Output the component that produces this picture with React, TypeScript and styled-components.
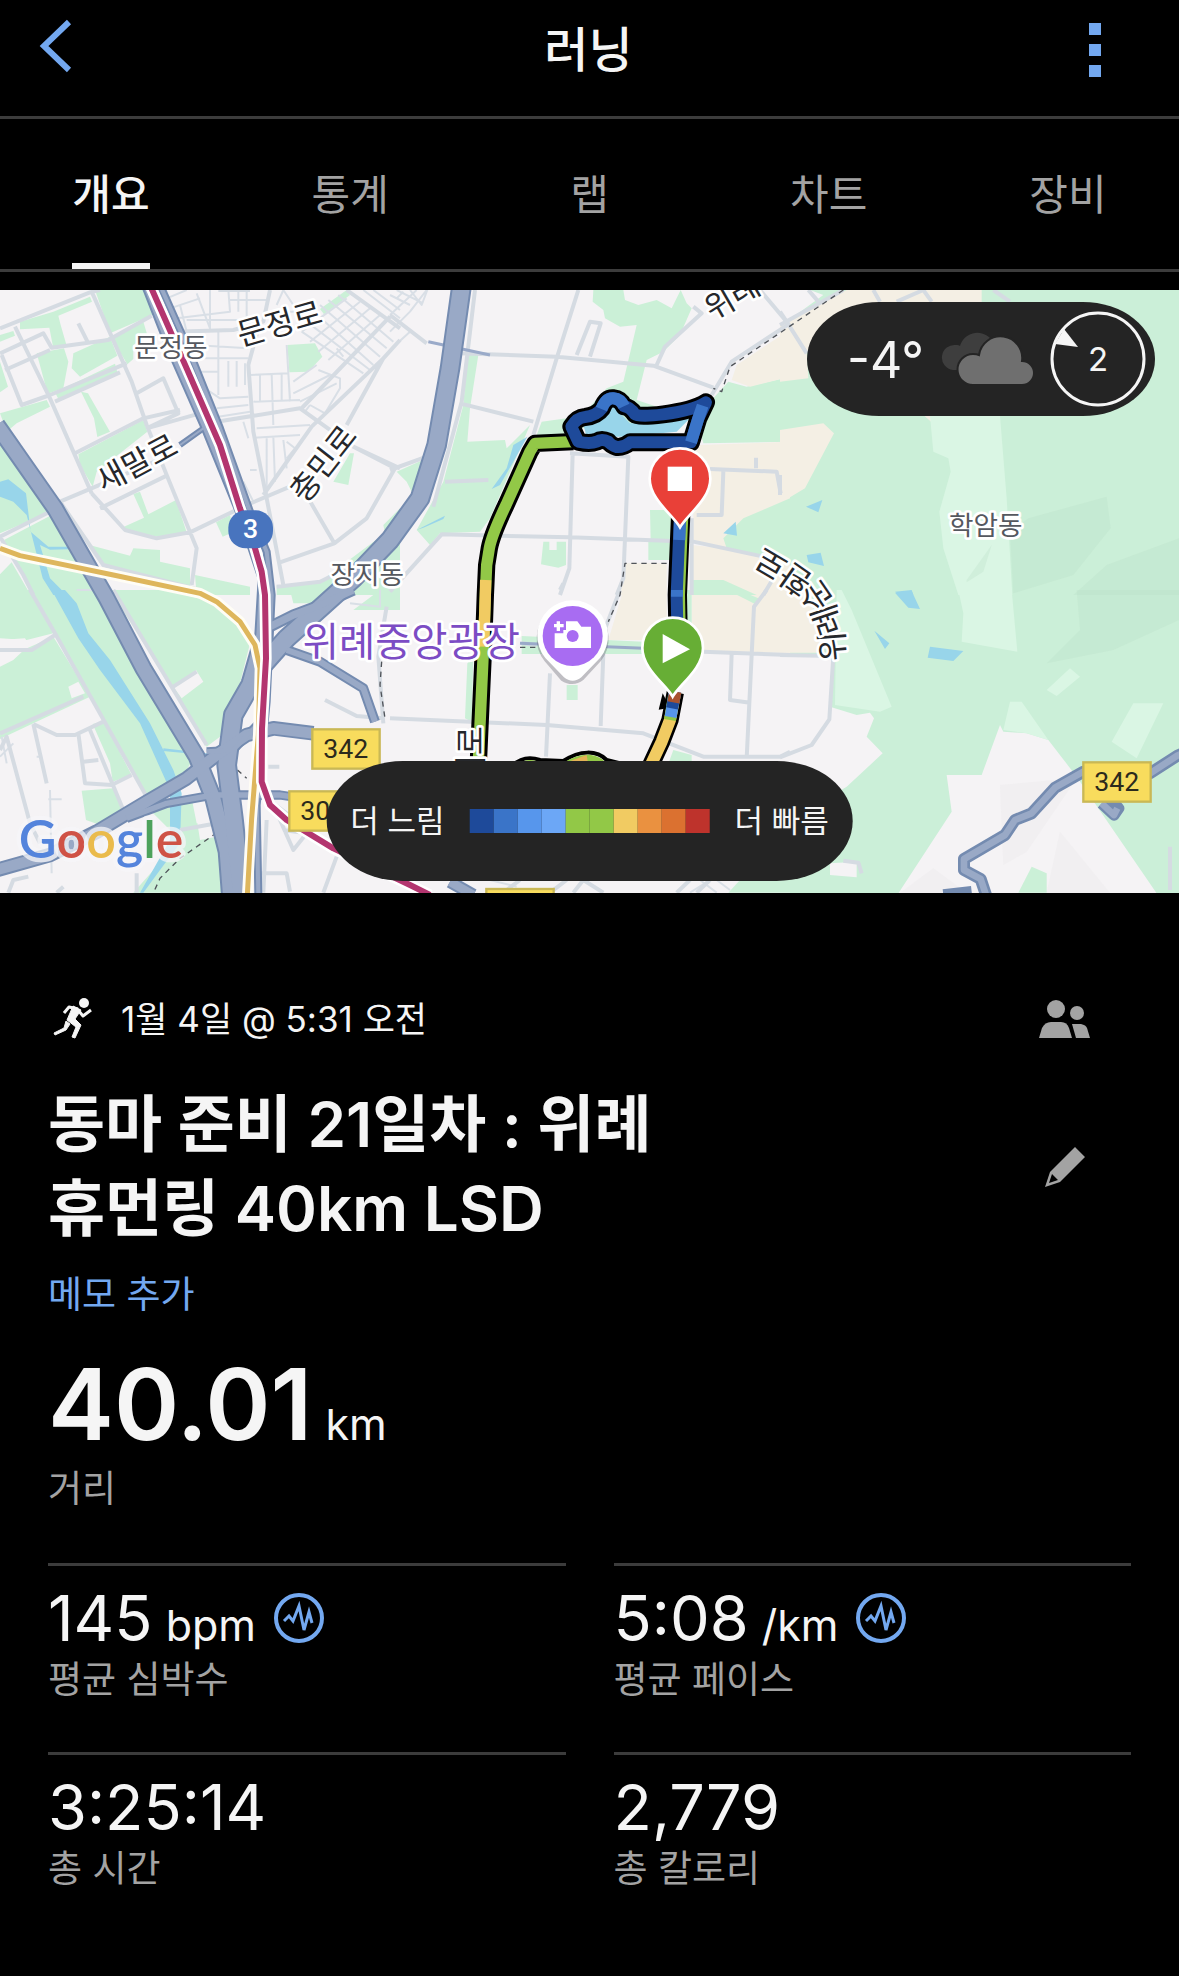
import React from "react";
import styled, { createGlobalStyle } from "styled-components";

const FONT = `Inter, "Noto Sans CJK KR", "Noto Sans", sans-serif`;
const KR = `"Noto Sans CJK KR", "Noto Sans", sans-serif`;

const color = {
  bg: "#000000",
  text: "#f5f5f5",
  muted: "#a3a3a3",
  line: "#3c3c3c",
  accent: "#73a8f0",
  panel: "#242424",
};

const GlobalStyle = createGlobalStyle`
  *, *::before, *::after { box-sizing: border-box; }
  html, body { margin: 0; background: ${color.bg}; }
  body { font-family: ${FONT}; color: ${color.text}; }
  h1, h2, p, dl, dt, dd { margin: 0; font-weight: 400; }
  button { font: inherit; color: inherit; background: none; border: 0; padding: 0; cursor: pointer; }
  svg { display: block; }
`;

const Screen = styled.main`
  min-height: 100vh;
  background: ${color.bg};
`;

const Header = styled.header`
  display: grid;
  grid-template-columns: 1fr auto 1fr;
  align-items: start;
  height: 119px;
  padding: 16px 78px 0 36px;
  border-bottom: 3px solid ${color.line};
`;

const HeaderTitle = styled.h1`
  padding-left: 40px;
  font-size: 48px;
  font-weight: 500;
  line-height: 68px;
`;

const IconButton = styled.button<{ $end?: boolean }>`
  justify-self: ${(p) => (p.$end ? "end" : "start")};
  color: ${color.accent};
`;

const Tabs = styled.nav`
  display: flex;
  justify-content: space-between;
  padding: 0 72px;
  border-bottom: 3px solid ${color.line};
`;

const Tab = styled.button<{ $active?: boolean }>`
  min-width: 78px;
  height: 150px;
  border-bottom: 6px solid ${(p) => (p.$active ? color.text : "transparent")};
  font-size: 42px;
  font-weight: ${(p) => (p.$active ? 500 : 400)};
  color: ${(p) => (p.$active ? color.text : color.muted)};
`;

const MapArea = styled.section`
  position: relative;
  margin-top: 18px;
  overflow: hidden;
`;

const MapSvg = styled.svg`
  width: 100%;
  height: auto;
`;

const Weather = styled.div`
  position: absolute;
  top: 12px;
  right: 24px;
  display: flex;
  align-items: center;
  height: 114px;
  padding: 0 9px 0 40px;
  border-radius: 72px / 57px;
  background: ${color.panel};
`;

const Temperature = styled.span`
  width: 93px;
  padding-top: 2px;
  font-size: 50px;
  line-height: 60px;
`;

const Wind = styled.div`
  display: grid;
  place-items: center;
  margin-left: 16px;
  > * { grid-area: 1 / 1; }
`;

const WindSpeed = styled.span`
  font-size: 33px;
  line-height: 40px;
`;

const Legend = styled.div`
  position: absolute;
  bottom: 12px;
  left: 50%;
  transform: translateX(-50%);
  display: flex;
  align-items: center;
  gap: 25px;
  height: 120px;
  padding: 0 24px;
  border-radius: 76px / 60px;
  background: ${color.panel};
  font-size: 31px;
  white-space: nowrap;
`;

const LegendLabel = styled.span`
  padding-bottom: 5px;
`;

const Scale = styled.div`
  display: flex;
`;

const Swatch = styled.i<{ $fill: string }>`
  width: 24px;
  height: 24px;
  background: ${(p) => p.$fill};
`;

const Details = styled.section`
  padding: 96px 48px 0;
`;

const DateRow = styled.div`
  display: flex;
  align-items: center;
  height: 60px;
  padding-right: 40px;
`;

const DateText = styled.p`
  flex: 1;
  padding-left: 20px;
  font-size: 35px;
  line-height: 48px;
`;

const TitleRow = styled.div`
  display: flex;
  align-items: center;
  justify-content: space-between;
  padding: 34px 46px 0 0;
`;

const ActivityTitle = styled.h2`
  max-width: 640px;
  font-size: 62px;
  font-weight: 600;
  line-height: 84px;
`;

const PlainButton = styled.button`
  color: ${color.muted};
`;

const MemoLink = styled.a`
  display: inline-block;
  margin-top: 20px;
  font-size: 37px;
  line-height: 48px;
  color: ${color.accent};
  text-decoration: none;
`;

const Stat = styled.div<{ $hero?: boolean }>`
  display: flex;
  flex-direction: column;
  gap: 6px;
  padding: ${(p) => (p.$hero ? "30px 0 50px" : "20px 0 48px")};
  border-top: ${(p) => (p.$hero ? "0" : `3px solid ${color.line}`)};
`;

const StatLabel = styled.dt`
  order: 2;
  font-size: 37px;
  line-height: 48px;
  color: ${color.muted};
`;

const StatValue = styled.dd<{ $hero?: boolean }>`
  display: flex;
  align-items: center;
  gap: 18px;
  height: ${(p) => (p.$hero ? 110 : 64)}px;
  font-size: ${(p) => (p.$hero ? 99 : 63)}px;
  font-weight: ${(p) => (p.$hero ? 600 : 400)};
  line-height: ${(p) => (p.$hero ? 110 : 64)}px;
`;

const Reading = styled.span`
  display: flex;
  align-items: baseline;
  gap: 13px;
`;

const Unit = styled.span`
  font-size: 43px;
  font-weight: 400;
  line-height: 43px;
`;

const StatGrid = styled.dl`
  display: grid;
  grid-template-columns: 1fr 1fr;
  column-gap: 48px;
`;

const scaleColors = [
  "#1e4a9a", "#3a74c8", "#5796ec", "#6ca7f6", "#92c847",
  "#92c847", "#f1cb62", "#ea9140", "#db7130", "#be332c",
];

const stats = [
  { value: "145", unit: "bpm", label: "평균 심박수", chart: true },
  { value: "5:08", unit: "/km", label: "평균 페이스", chart: true },
  { value: "3:25:14", label: "총 시간" },
  { value: "2,779", label: "총 칼로리" },
];

/* ---------- map data ---------- */

type Sheet = {
  at: [number, number];
  white?: string;
  green?: string;
  sand?: string;
  pale?: string;
  shade?: string;
  top?: string;
  water?: string;
  road?: string;
  lane?: string;
};

const sheets: Sheet[] = [
  {
    at: [0, 0],
    green:
      "M0 150L40 138L45 152L0 170z M60 133V110L160 80L270 35L276 50L175 92L182 120L200 182L160 190L148 128z M285 15H435L462 88L330 145z M332 155L430 110L442 150L400 180V222L382 238z M110 205L192 190L205 230L190 310L143 326z M220 205L330 155L352 212L240 275L215 250z M165 322L345 236L352 262L175 342z M0 230L24 305L0 322z M0 385L140 345L150 365L50 415L20 440z M243 320L264 325L330 440L292 456L282 400z M235 508L430 405L442 440L290 560L278 605L240 540z M400 627L420 620L445 688L528 645L560 742L500 758L400 745L362 730L432 698z M0 440L70 530L155 680L0 745z M12 765L155 690L300 930H95z M0 868L35 832L92 930H0z M268 780L390 812L400 790L480 795V830L570 850V905L450 872L300 835z M585 870L750 905V930H590z M862 180L945 175L967 215L925 260L868 262z M1040 15L960 72L972 88L1050 30z M648 712L690 690L702 740L668 755z M1050 505H1062L1045 600L1000 590z M1200 670L1150 720L1155 745L1020 845L960 890L830 902V930H1200z",
    water: "M0 590L25 583L78 625L92 740L145 785H205V793L150 794L120 780L150 880L200 930H160L128 880L80 690L40 650L0 635z",
    road:
      "M0 130L270 22L300 15 M45 125L150 340L275 625 M0 205L130 145L155 188L325 165L455 92 M15 255L150 195 M5 210L65 360L150 330L380 235 M275 20L395 290L440 420L500 570L590 790L575 900 M165 350L360 262 M225 505L430 400L540 375 M410 325L490 280L535 385L440 430 M440 430L600 385 M235 115L265 175 M180 650L500 515 M275 625L375 735L470 760L570 742L740 660L870 605 M300 670L500 572 M180 650L310 840L600 915 M190 660L0 755L70 870L100 930 M925 640L1003 775L1100 700L1185 550L1060 485L900 370L650 410 M840 832L1003 775 M830 905L960 890L1140 800 M750 15L655 15 M775 130L745 240L760 440L800 640L850 900 M520 140L700 135L790 110L810 15 M790 630L935 425L1150 220L1200 165 M1150 220L1040 420 M1040 15L1200 130 M900 375L1170 95 M1060 485L1200 550",
    lane:
      "M500 40L560 15 M510 70L600 40 M530 100L690 80L685 15 M540 60L560 140 M590 25L630 130 M630 15V135 M560 105H740V15 M715 15V80 M690 45H800 M580 180L745 190 M600 220H745 M655 140V330 M685 228V305 M710 228V305 M735 235V300 M590 260H655 M600 300L660 340L745 335 M650 370L745 360 M655 395L750 380 M750 270L865 265L870 340 M780 270V350 M815 268L820 420 M845 268V350 M760 350L900 345 M860 180L870 350 M880 290L950 240 M880 325L990 270 M900 350L1010 295 M955 255L1020 280V310L975 385L930 360 M915 380L930 360 M770 430L930 420 M760 458L900 450 M800 460V630 M820 455L825 590 M850 465L860 550 M860 470L885 490L860 520 M730 410L745 460 M750 555H770 M730 590L760 650 M935 75L1120 240 M960 60L1140 215 M985 45L1160 190 M1015 30L1180 170 M905 140L1090 265 M920 110L1110 255 M905 140L1040 40 M930 170L1080 50 M955 200L1110 70 M985 225L1140 90 M1010 190L1030 215 M1090 15L1200 100 M1120 15L1200 75 M850 15L880 60 M830 60L850 15 M870 80H940",
  },
  {
    at: [1170, 0],
    green:
      "M610 15H700L705 45L745 60L800 45L845 70L872 15L890 55L905 70L870 150L820 200L770 225L740 345L860 385L700 430H540L650 310L700 290L740 120L690 125L645 100L640 75L608 50z M455 410L530 400V450H440z M232 210H265L240 370L232 470L345 465L350 490L420 420L300 700L270 740L150 745L120 780L80 735L160 590L220 360z M20 560L110 520L75 640L50 590z M460 770H478V795H500V770H528V840L505 848L453 838z M780 675H850V825H775V770L782 765z M1015 290L1070 305L1200 275V470L940 475L930 440L960 350z",
    sand: "M1190 140L1040 240L1025 285L1080 305L1200 275V140z M930 480L1200 470V840L1000 790L910 765V480z M705 835H830V930H690z M905 780L1000 790L1200 830V930H905z",
    top: "M1200 640L1060 700L1000 760L1010 790L1200 835z M905 885L1000 885L1100 930H905z",
    water:
      "M1000 745L1037 710L1041 752z M350 550L370 480L412 455L370 530L330 600L305 612z M80 735L165 692L160 702L100 728z M580 420L640 400L660 355L720 415H800L900 400L860 440L700 455H590z",
    road:
      "M255 15L215 350L130 665 M565 15L500 220L430 450 M210 205L500 215L790 242L970 308 M560 210L600 110L632 115L600 215 M800 240L825 185L935 85L910 65 M965 330L1025 230L1200 115 M1110 15L1190 110 M210 355L430 410 M165 590L295 585 M0 555L110 515 M0 920L155 748L540 757L910 770L1120 815 M548 505L538 850L510 930 M540 505L715 515L700 880L680 930 M920 690H995L1000 560 M960 552L1160 560L1172 625 M1098 550V518 M905 700V930 M1120 930L1150 880 M0 90L110 175",
    lane: "M0 30L60 60 M0 90L80 15 M0 140L60 80L110 15 M20 15L100 55 M0 195L60 140 M20 40L40 20 M60 15L95 60L112 15",
  },
  {
    at: [2340, 0],
    white: "M0 15H90L130 30L20 110L0 90z",
    sand: "M0 115L200 15H605V60H300L80 200L85 280L0 290z M0 435L130 415L162 445L75 610L0 655z M430 390H470L455 412z",
    pale: "M450 393H660L680 640L697 930H535L490 790L478 680L512 560L505 520L460 500z",
    shade: "M745 700L980 635L992 730L880 870L700 925L690 740z M980 840L1197 760V930H880z M560 885L635 780L610 860L560 892z",
    water: "M78 665L127 645L115 682z M80 810L122 803L132 843L85 832z M345 920L395 915L400 930H360z",
    road: "M0 120L190 15 M85 15L115 50 M0 80L20 110L80 205 M280 15L300 50 M350 50L430 15L455 50 M640 15L690 50 M0 570V630",
  },
  {
    at: [0, 915],
    green:
      "M0 0H90L160 130L80 150L0 145z M0 210L160 140L270 320L100 400L0 447z M90 0H300L600 470L560 540L440 615L160 130z M330 0H500L650 40L755 140L720 280L660 440L620 470L520 300z M278 402L312 395L395 555L338 575L330 520z M245 602L340 595L372 662L300 705L258 690z M440 650L580 620L600 750L650 740L670 908H400L540 750z M870 0H1060L960 40H880z M1140 0H1200V60H1060z",
    white: "M0 150L75 145L88 165L40 210L0 230z M205 290L235 275L255 310L215 325z M520 290L588 240L610 275L545 325z M570 600L630 590L640 690L590 700z",
    water:
      "M155 0H195L230 40L265 130L330 210L450 400L520 540L545 610L540 760L480 840L430 908H420L510 750V600L420 400L300 240L235 145z M490 475L620 490V496L490 483z M710 540L745 575L720 550z",
    road:
      "M90 0L165 130L440 620 M0 180L95 180L165 135 M100 402L140 580 M100 402L170 435L225 435L310 395 M235 430L255 580L335 585L395 555 M0 430L250 320 M250 515L295 510 M270 420L370 660 M0 480L20 440L90 700L120 760 M340 0L620 465 M520 290L590 245 M820 645L880 780L920 730L850 720 M770 850L860 850L870 905 M800 690L790 908 M970 908L1010 800 M975 330L1070 378L1150 385 M1150 400L1135 200L1160 50 M805 530H838 M540 720L650 700 M25 908L40 870L85 860 M170 908L190 890 M410 850V908 M820 640L900 700",
    lane: "M0 500L40 460 M20 520L5 440 M110 500H125 M145 628H185 M150 600L155 850 M230 0L300 0 M1050 40L1140 50V0",
  },
  {
    at: [1170, 915],
    green:
      "M530 285H563V330H530z M232 220L250 200L245 395L225 385z M395 138L760 155V192H395z M850 480L905 495V513H838z M1050 870H1200V908H1015z",
    sand: "M700 0H830V150H655z M905 0H1200V188H940L905 110z",
    top: "M950 0H1045L1105 25L1095 42L1040 14z M890 0H905V110H890z",
    road:
      "M0 385L470 405L760 430L940 500H1170L1200 485 M480 250L468 500 M640 190L632 408 M510 0L520 -20 M690 0L640 130 M940 185L1200 195 M1025 190L1020 330L1080 338 M1130 0L1092 50L1070 505 M395 160L440 165 M350 900L390 870 M480 908L530 870 M550 908L580 870L640 908 M860 908L900 870 M920 908L960 870",
    lane: "M930 870L980 908 M960 870L900 908 M980 870L1020 900 M300 870L380 890",
  },
  {
    at: [2340, 915],
    sand: "M0 0H90L125 188H0z",
    white: "M0 190L155 200L150 350L230 375L270 368L282 385L260 440L308 490L200 590L150 620H0z M660 405L670 425L740 430L805 450L890 560L1130 910H355L515 665L500 555H605z M150 820L230 815V862L150 855z",
    pale: "M170 0H185L215 60L335 350L300 365L165 345z M535 0H695L712 185L545 155L550 70z M690 335H725L805 450L740 430L670 420z M1060 340H1150L1070 505L995 455z M800 300L870 235L900 260L830 318z",
    top: "M755 830L800 850V908H715z",
    shade: "M890 0L1197 0V90L1000 180L800 220L900 120z",
    water: "M345 8L395 3L420 57L385 53z M283 122L328 160L315 177z M450 170L550 183L520 213L443 203z",
    road: "M0 195L160 198L148 388L95 465L0 502 M190 812L235 818L245 850 M1170 770V900",
  },
];

const layer = (key: keyof Omit<Sheet, "at">, props: React.SVGProps<SVGPathElement>) =>
  sheets.map((s) =>
    s[key] ? (
      <path key={key + s.at.join()} transform={`translate(${s.at[0]} ${s.at[1]})`} d={s[key]} {...props} />
    ) : null
  );

const highways = [
  { d: "M-10 420L60 520L165 670L320 940L430 1150L590 1415L640 1540L680 1700L690 1830", w: 54 },
  { d: "M1385 0L1350 250L1310 480L1260 640L1170 765L1060 880L860 1060L780 1150L700 1290L680 1440L700 1600L725 1830", w: 62 },
  { d: "M440 0L510 180L620 430L730 700L790 880L780 1050L740 1190", w: 34 },
  { d: "M480 0L560 180L660 430L750 680L800 800L815 930L800 1250L770 1560L775 1830", w: 24 },
  { d: "M-10 1755L150 1710L290 1640L440 1550L560 1480L650 1410L740 1350L820 1330L940 1345", w: 44 },
  { d: "M380 1600L500 1555L640 1530L840 1530L940 1545", w: 28 },
  { d: "M800 1030L880 990L960 960L1060 915", w: 34 },
  { d: "M860 1095L960 1130L1090 1210L1125 1310", w: 30 },
  { d: "M620 1400L700 1395L790 1300", w: 26 },
  { d: "M540 480L610 430L650 410", w: 18 },
  { d: "M1350 1790L1420 1830", w: 38 },
];

const ridge = "M3560 1400L3532 1412L3450 1465L3250 1460L3165 1508L3095 1585L3045 1605L3015 1650L2892 1722V1755L2942 1782L2958 1830";
const yellowLine = "M0 790L60 812L340 870L600 925L650 950L720 1010L765 1080L780 1150L775 1350L755 1600L742 1830";
const redLine =
  "M450 0L560 250L660 480L720 670L765 790L785 860L795 930L798 1120L786 1330L785 1490L810 1560L860 1605L1000 1690L1230 1800L1290 1830";

const blueLoop =
  "M1735 470L1714 425Q1730 398 1755 396Q1790 392 1806 370Q1818 338 1840 340Q1862 342 1872 364Q1890 366 1905 388Q1915 397 1990 388Q2080 376 2118 352L2095 400L2073 472L1890 472Q1870 488 1850 486Q1832 480 1825 470Q1805 460 1790 470Q1770 478 1735 470Z";

const leftTrack = "M1720 470L1605 475L1590 500L1518 660Q1475 750 1468 790L1460 840L1456 930L1450 1100L1440 1320L1432 1500";

const mapName = {
  fontFamily: KR,
  stroke: "#ffffff",
  strokeWidth: 16,
  strokeLinejoin: "round" as const,
  paintOrder: "stroke",
  textAnchor: "middle" as const,
};

function Shield({ x, y, label }: { x: number; y: number; label: string }) {
  return (
    <g transform={`translate(${x} ${y})`}>
      <rect x="3" y="3" width="202" height="118" fill="#f8dc5d" stroke="#c9b855" strokeWidth="7" />
      <text x="103" y="88" textAnchor="middle" fontFamily="Roboto, sans-serif" fontSize="80" fill="#2c2a1c">
        {label}
      </text>
    </g>
  );
}

function Pin({ x, y, fill, children }: { x: number; y: number; fill: string; children: React.ReactNode }) {
  return (
    <g transform={`translate(${x} ${y})`}>
      <path
        d="M0 146C-20 110-91 62-91 0A91 91 0 0 1 91 0C91 62 20 110 0 146z"
        fill={fill}
        stroke="#ffffff"
        strokeWidth="8"
      />
      {children}
    </g>
  );
}

function RouteMap() {
  return (
    <MapSvg viewBox="0 15 3537 1809" role="img" aria-label="러닝 경로 지도">
      <rect width="3537" height="1830" fill="#f5f3f5" />
      <rect x="2370" width="1167" height="1830" fill="#cbefd8" />
      {layer("green", { fill: "#cbf0d7" })}
      {layer("white", { fill: "#f5f3f5" })}
      {layer("sand", { fill: "#f4efe4" })}
      {layer("pale", { fill: "#daf6e4" })}
      {layer("shade", { fill: "#b9dfc8", opacity: 0.3 })}
      {layer("top", { fill: "#cbf0d7" })}
      <path d="M3000 1500L3230 1480L3080 1700L3010 1740z M2700 1824L2800 1750L2900 1824z M3180 1640L3330 1824H3140z" fill="#eeecee" opacity="0.5" />
      {layer("water", { fill: "#98d5ea" })}
      <g fill="none" strokeLinejoin="round">
        {layer("lane", { stroke: "#d9dfe6", strokeWidth: 6 })}
        {layer("road", { stroke: "#d5dbe2", strokeWidth: 12 })}
        <path
          d="M2530 15L2190 245L2165 320L2140 310 M2000 835H1875L1860 930L1825 1010 M1560 1087H1620 M1145 1130L1140 1200L1155 1300 M690 1435L740 1480 M680 1440V1570L655 1640L540 1720L480 1780L460 1824"
          stroke="#50545a"
          strokeWidth="4"
          strokeDasharray="16 14"
        />
        <path d="M1560 1075L1930 1090 M1285 170L1470 210" stroke="#9aaac9" strokeWidth="9" />
        {highways.map((h) => (
          <path key={h.d} d={h.d} stroke="#748bb0" strokeWidth={h.w} />
        ))}
        {highways.map((h) => (
          <path key={h.d} d={h.d} stroke="#99a9c6" strokeWidth={h.w - 12} />
        ))}
        <path d="M3305 1555L3342 1590L3356 1570L3335 1545 M2830 1830L2915 1820" stroke="#748bb0" strokeWidth="34" />
        <path d="M3305 1555L3342 1590L3352 1570" stroke="#99a9c6" strokeWidth="20" />
        <path d={ridge} stroke="#748bb0" strokeWidth="36" />
        <path d={ridge} stroke="#99a9c6" strokeWidth="20" />
        <path d={yellowLine} stroke="#fffdf5" strokeWidth="32" />
        <path d={yellowLine} stroke="#deb65c" strokeWidth="15" />
        <path d={redLine} stroke="#ffffff" strokeWidth="34" />
        <path d={redLine} stroke="#b3356f" strokeWidth="18" />
      </g>

      <g fill="none" strokeLinejoin="round">
        <path d={leftTrack} stroke="#000" strokeWidth="52" />
        <path d={leftTrack} stroke="#92c847" strokeWidth="34" />
        <path d="M1457 885L1456 930L1451 1085" stroke="#f1cb62" strokeWidth="34" />
        <path d={blueLoop} stroke="#000" strokeWidth="54" />
        <path d={blueLoop} stroke="#1e4a9a" strokeWidth="36" />
        <path d="M1804 372Q1818 338 1840 340Q1862 342 1872 364 M2108 362L2095 400L2073 472" stroke="#3a74c8" strokeWidth="36" />
        <path d="M2042 690L2032 930L2035 1080" stroke="#000" strokeWidth="58" />
        <path d="M2046 690L2036 930L2039 1080" stroke="#92c847" strokeWidth="38" />
        <path d="M2040 690L2030 930L2033 1080" stroke="#1e4a9a" strokeWidth="36" />
        <path d="M2040 700L2038 765 M2031 915V935" stroke="#3a74c8" strokeWidth="36" />
        <path d="M2026 1222L2010 1305L1985 1370L1950 1445" stroke="#000" strokeWidth="52" />
        <path d="M1988 1225L1976 1274L2010 1268z" fill="#000" />
        <path d="M2026 1222L2010 1305L1985 1370L1950 1445" stroke="#f1cb62" strokeWidth="36" />
        <path d="M2022 1232L2010 1305" stroke="#92c847" strokeWidth="36" />
        <path d="M2024 1225L2012 1296" stroke="#5796ec" strokeWidth="36" />
        <path d="M2026 1220L2016 1270" stroke="#1e4a9a" strokeWidth="36" />
        <path d="M2026 1220L2020 1252" stroke="#a8532f" strokeWidth="36" />
        <path d="M1530 1450C1560 1415 1590 1415 1620 1425L1690 1428C1740 1395 1790 1395 1820 1425L1880 1440" stroke="#000" strokeWidth="12" />
        <path d="M1540 1445C1570 1420 1600 1422 1620 1432L1690 1434C1740 1402 1785 1402 1815 1430L1860 1445z" fill="#92c847" />
        <path d="M1630 1434L1700 1432L1760 1410L1765 1440H1630z" fill="#e4b255" />
      </g>

      <g transform="translate(1718 1053)">
        <path d="M-34 126C-12 140 12 140 32 124L84 68A108 108 0 1 0-84 68z" fill="#5d5d66" opacity="0.35" transform="translate(0 8)" />
        <path d="M-26 124C-10 138 10 138 26 124L82 66A106 106 0 1 0-82 66z" fill="#ffffff" />
        <circle r="90" fill="#a86cf2" />
        <path d="M-54-8H-28V-18H-20V-44H14L26-28H55V36H-54z" fill="#ffffff" />
        <path d="M-48-44H-38V-36H-27V-26H-38V-15H-48V-26H-56V-36H-48z" fill="#ffffff" />
        <circle r="18" fill="#a86cf2" />
      </g>

      <g fill="#55585f" fontSize="80" fontWeight="400">
        <text {...mapName} x="512" y="216">문정동</text>
        <text {...mapName} x="1102" y="896">장지동</text>
        <text {...mapName} x="2957" y="751">학암동</text>
      </g>
      <text {...mapName} x="1234" y="1114" fontSize="118" fontWeight="400" fill="#7c4cc4">위례중앙광장</text>
      <g fill="#26282c" fontSize="94" fontWeight="400">
        <text {...mapName} transform="translate(848 148) rotate(-16)">문정로</text>
        <text {...mapName} transform="translate(426 564) rotate(-28)">새말로</text>
        <text {...mapName} transform="translate(996 556) rotate(-52)">충민로</text>
        <text {...mapName} textAnchor="start" transform="translate(2138 108) rotate(-30)">위례</text>
        <text {...mapName} transform="translate(1446 1410) rotate(-90)">서로</text>
        <path id="ringRoad" d="M2534 1126Q2538 1000 2470 905Q2400 835 2200 735" fill="none" />
        <text {...mapName} textAnchor="start" fontSize="98">
          <textPath href="#ringRoad">위례순환로</textPath>
        </text>
      </g>

      <rect x="685" y="676" width="134" height="114" rx="52" fill="#4874be" />
      <text x="752" y="760" textAnchor="middle" fontFamily="Roboto, sans-serif" fontSize="80" fontWeight="500" fill="#fff">3</text>
      <Shield x={934} y={1330} label="342" />
      <Shield x={865} y={1516} label="303" />
      <Shield x={3247} y={1429} label="342" />
      <Shield x={1456} y={1809} label="" />

      <Pin x={2040} y={581} fill="#e94038">
        <rect x="-37" y="-36" width="73" height="73" fill="#ffffff" />
      </Pin>
      <Pin x={2018} y={1089} fill="#67ae35">
        <path d="M-30-42L52 4L-30 46z" fill="#ffffff" />
      </Pin>

      <text x="56" y="1718" fontFamily="Lato, sans-serif" fontSize="156" fontWeight="600" stroke="#f6f6f8" strokeWidth="26" strokeOpacity="0.75" strokeLinejoin="round" paintOrder="stroke">
        <tspan fill="#5484dc">G</tspan>
        <tspan fill="#cf5246">o</tspan>
        <tspan fill="#eabb4c">o</tspan>
        <tspan fill="#5484dc">g</tspan>
        <tspan fill="#4da25c">l</tspan>
        <tspan fill="#cf5246">e</tspan>
      </text>
    </MapSvg>
  );
}

/* ---------- icons ---------- */

const BackIcon = () => (
  <svg width="40" height="60" viewBox="0 0 40 60" fill="none" stroke="currentColor" strokeWidth="6">
    <path d="M33 6L8 30L33 54" />
  </svg>
);

const MoreIcon = () => (
  <svg width="12" height="62" viewBox="0 0 12 62" fill="currentColor">
    <path d="M0 7h12v12H0z M0 28h12v12H0z M0 49h12v12H0z" />
  </svg>
);

const CloudIcon = () => (
  <svg width="94" height="54" viewBox="0 0 94 54">
    <path d="M13 38a12 12 0 0 1 3-25c2 0 3 0 4 1A18 18 0 0 1 50 6L30 38z" fill="#3e3e3e" />
    <path d="M33 53a15 15 0 0 1 0-31c2 0 4 0 6 1A21 21 0 0 1 82 29a12 12 0 0 1 0 24z" fill="#6f6f6f" stroke={color.panel} strokeWidth="2" />
  </svg>
);

const CompassIcon = () => (
  <svg width="96" height="96" viewBox="0 0 96 96">
    <circle cx="48" cy="48" r="46" fill="none" stroke={color.text} strokeWidth="3" />
    <path d="M14 18L28 36L5 33z" fill={color.text} />
  </svg>
);

const RunnerIcon = () => (
  <svg width="53" height="48" viewBox="0 0 53 48" fill="none" stroke={color.text} strokeLinejoin="round">
    <circle cx="36" cy="8" r="5" fill={color.text} stroke="none" />
    <path d="M16 18L21 12L30 14" strokeWidth="3" />
    <path d="M30 15L35 21L43 15" strokeWidth="3" />
    <path d="M25 11L33 15L27 24L33 30L27 43L24 42L28 32L19 25L22 18z" fill={color.text} strokeWidth="1" />
    <path d="M18 26L22 29L18 35L7 40L6 38L16 33z" fill={color.text} strokeWidth="1" />
  </svg>
);

const PeopleIcon = () => (
  <svg width="52" height="40" viewBox="0 0 52 40" fill={color.muted}>
    <circle cx="17" cy="10" r="9" />
    <circle cx="38" cy="14" r="7" />
    <path d="M0 39L3 29Q6 23 12 23H22Q28 23 30 29L33 39z" />
    <path d="M33 25H42Q47 26 48 29L51 39H37z" />
  </svg>
);

const PencilIcon = () => (
  <svg width="40" height="40" viewBox="0 0 40 40" fill={color.muted}>
    <path fillRule="evenodd" d="M30 0L40 10L15 35L0 40L5 25z M7 27L4 36L13 33z" />
  </svg>
);

const PulseIcon = () => (
  <svg width="50" height="50" viewBox="0 0 50 50" fill="none" stroke={color.accent}>
    <circle cx="25" cy="25" r="23" strokeWidth="4" />
    <path d="M10 28L15 23L19 28L25 13L30 37L35 19L38 30" strokeWidth="3" />
  </svg>
);

export default function App() {
  return (
    <Screen>
      <GlobalStyle />
      <Header>
        <IconButton aria-label="뒤로"><BackIcon /></IconButton>
        <HeaderTitle>러닝</HeaderTitle>
        <IconButton $end aria-label="더 보기"><MoreIcon /></IconButton>
      </Header>
      <Tabs>
        {["개요", "통계", "랩", "차트", "장비"].map((name, i) => (
          <Tab key={name} $active={i === 0}>{name}</Tab>
        ))}
      </Tabs>

      <MapArea>
        <RouteMap />
        <Weather>
          <Temperature>-4°</Temperature>
          <CloudIcon />
          <Wind>
            <CompassIcon />
            <WindSpeed>2</WindSpeed>
          </Wind>
        </Weather>
        <Legend>
          <LegendLabel>더 느림</LegendLabel>
          <Scale>
            {scaleColors.map((fill, i) => <Swatch key={i} $fill={fill} />)}
          </Scale>
          <LegendLabel>더 빠름</LegendLabel>
        </Legend>
      </MapArea>

      <Details>
        <DateRow>
          <RunnerIcon />
          <DateText>1월 4일 @ 5:31 오전</DateText>
          <PlainButton aria-label="공개 설정"><PeopleIcon /></PlainButton>
        </DateRow>
        <TitleRow>
          <ActivityTitle>동마 준비 21일차 : 위례 휴먼링 40km LSD</ActivityTitle>
          <PlainButton aria-label="제목 편집"><PencilIcon /></PlainButton>
        </TitleRow>
        <MemoLink href="#memo">메모 추가</MemoLink>
        <dl>
          <Stat $hero>
            <StatLabel>거리</StatLabel>
            <StatValue $hero>
              <Reading>40.01<Unit>km</Unit></Reading>
            </StatValue>
          </Stat>
        </dl>
        <StatGrid>
          {stats.map((s) => (
            <Stat key={s.label}>
              <StatLabel>{s.label}</StatLabel>
              <StatValue>
                <Reading>{s.value}{s.unit && <Unit>{s.unit}</Unit>}</Reading>
                {s.chart && <PulseIcon />}
              </StatValue>
            </Stat>
          ))}
        </StatGrid>
      </Details>
    </Screen>
  );
}
